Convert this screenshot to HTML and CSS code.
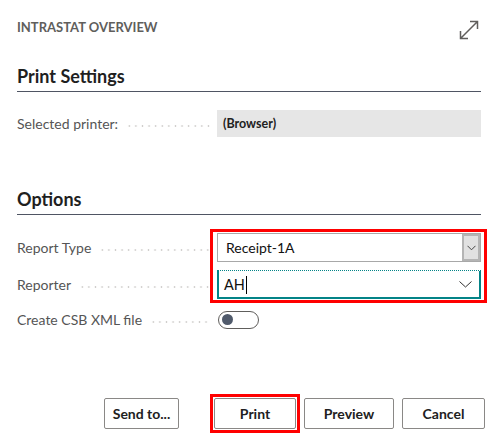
FILE: index.html
```html
<!DOCTYPE html>
<html lang="en">
<head>
<meta charset="utf-8">
<title>Intrastat Overview</title>
<link rel="stylesheet" href="styles.css">
</head>
<body>
<div class="dialog">
  <header class="header">
    <div class="title">INTRASTAT OVERVIEW</div>
    <svg class="expand" width="20" height="20" viewBox="0 0 20 20" aria-hidden="true">
      <path d="M1.5 18.5 L18.5 1.5 M11 1.5 H18.5 V9 M1.5 11 V18.5 H9" fill="none" stroke="#605e5c" stroke-width="1.5"/>
    </svg>
  </header>

  <section class="group group-print">
    <h2 class="group-title">Print Settings</h2>
    <div class="fields">
      <div class="label"><span class="label-text">Selected printer:</span><span class="leader"></span></div>
      <div class="readonly">(Browser)</div>
    </div>
  </section>

  <section class="group group-options">
    <h2 class="group-title">Options</h2>
    <div class="fields fields-options">
      <div class="label row1"><span class="label-text">Report Type</span><span class="leader"></span></div>
      <div class="select row1">
        <span class="select-value">Receipt-1A</span>
        <span class="select-btn">
          <svg width="9" height="6" viewBox="0 0 9 6"><path d="M0.5 0.8 L4.5 4.8 L8.5 0.8" fill="none" stroke="#444" stroke-width="1"/></svg>
        </span>
      </div>
      <div class="label row2"><span class="label-text">Reporter</span><span class="leader"></span></div>
      <div class="combo row2">
        <span class="combo-value">AH</span><span class="caret"></span>
        <svg class="combo-chev" width="13" height="7" viewBox="0 0 13 7"><path d="M0.5 0.5 L6.5 6 L12.5 0.5" fill="none" stroke="#323130" stroke-width="1"/></svg>
      </div>
      <div class="highlight"></div>
      <div class="label row3"><span class="label-text">Create CSB XML file</span><span class="leader"></span></div>
      <div class="toggle-cell row3"><span class="toggle"><span class="knob"></span></span></div>
    </div>
  </section>

  <footer class="actions">
    <button class="btn btn-send">Send to...</button>
    <span class="callout"><button class="btn btn-print">Print</button></span>
    <button class="btn btn-preview">Preview</button>
    <button class="btn btn-cancel">Cancel</button>
  </footer>
</div>
</body>
</html>
```

FILE: styles.css
```css
html, body {
  margin: 0;
  padding: 0;
  background: #ffffff;
}

body {
  font-family: Lato, "Noto Sans", sans-serif;
  color: #212121;
  width: 498px;
  height: 445px;
  overflow: hidden;
}

.dialog {
  padding: 0 17px;
}

.header {
  display: flex;
  justify-content: space-between;
  align-items: flex-start;
  padding-top: 19px;
  height: 40px;
}

.title {
  font-size: 13px;
  font-weight: 700;
  color: #605e5c;
  line-height: 16px;
}

.expand {
  margin-top: 1px;
  margin-right: 2px;
}

.group-title {
  margin: 0;
  font-size: 18px;
  font-weight: 700;
  color: #1f1f1f;
  line-height: 24px;
  padding-bottom: 3px;
  border-bottom: 1px solid #4f5563;
}

.group-print .group-title {
  margin-top: 5px;
}

.fields {
  display: grid;
  grid-template-columns: 200px 1fr;
  margin-top: 18px;
}

.label {
  display: flex;
  align-items: center;
  font-size: 14px;
  color: #555555;
  padding-right: 7px;
}

.label-text {
  white-space: nowrap;
}

.leader {
  flex: 1;
  height: 2px;
  margin-left: 8px;
  margin-top: 5px;
  background-image: radial-gradient(circle, #cfcdcb 0.9px, transparent 1.1px);
  background-size: 6.6px 2px;
  background-repeat: repeat-x;
}

.readonly {
  height: 27px;
  background: #e6e6e6;
  font-size: 12.5px;
  font-weight: 700;
  display: flex;
  align-items: center;
  padding-left: 6px;
  color: #212121;
}

.group-options {
  margin-top: 50px;
}

.fields-options {
  grid-template-rows: 29px 29px 18px;
  row-gap: 8px;
  margin-top: 18px;
}

.fields-options .row3 {
  margin-top: 7px;
}

.row1 { grid-row: 1; }
.row2 { grid-row: 2; }
.row3 { grid-row: 3; }

.select {
  grid-column: 2;
  display: flex;
  align-items: stretch;
  border: 1px solid #a8a8a8;
  box-sizing: border-box;
  font-size: 14px;
}

.select-value {
  flex: 1;
  display: flex;
  align-items: center;
  padding-left: 8px;
  color: #111111;
}

.select-btn {
  width: 14px;
  background: #e1e1e1;
  border: 2px solid #b4b4b4;
  display: flex;
  align-items: center;
  justify-content: center;
}

.combo {
  grid-column: 2;
  display: flex;
  align-items: center;
  box-sizing: border-box;
  border: 1px solid #038387;
  border-top-style: dotted;
  box-shadow: inset 1px 0 0 #038387, inset -1px 0 0 #038387, inset 0 -1px 0 #038387;
  font-size: 14.5px;
  padding-left: 6px;
  padding-right: 8px;
}

.combo-value {
  color: #111111;
}

.caret {
  width: 1px;
  height: 18px;
  background: #000000;
  margin-left: 1px;
}

.combo-chev {
  margin-left: auto;
}

.highlight {
  grid-column: 2;
  grid-row: 1 / span 2;
  margin: -4px -6px -4px -7px;
  border: 3px solid #ff0000;
  pointer-events: none;
}

.toggle-cell {
  grid-column: 2;
  display: flex;
  align-items: center;
}

.toggle {
  width: 41px;
  height: 18px;
  box-sizing: border-box;
  margin-left: 1px;
  border: 1px solid #605e5c;
  border-radius: 9px;
  display: flex;
  align-items: center;
  padding-left: 3px;
}

.knob {
  width: 11px;
  height: 11px;
  border-radius: 50%;
  background: #505a6b;
}

.actions {
  display: flex;
  justify-content: flex-end;
  align-items: center;
  gap: 8px;
  margin-top: 69px;
  margin-right: -4px;
}

.btn {
  font-family: Lato, "Noto Sans", sans-serif;
  font-size: 14px;
  font-weight: 700;
  color: #212121;
  background: #ffffff;
  border: 1px solid #8a8886;
  border-radius: 2px;
  height: 31px;
  padding: 0;
}

.btn-send { width: 75px; }
.btn-print { width: 82px; display: block; }
.btn-preview { width: 90px; }
.btn-cancel { width: 83px; }

.callout {
  display: block;
  border: 3px solid #ff0000;
  padding: 1px;
  margin-left: 23px;
  margin-right: -4px;
}
```
